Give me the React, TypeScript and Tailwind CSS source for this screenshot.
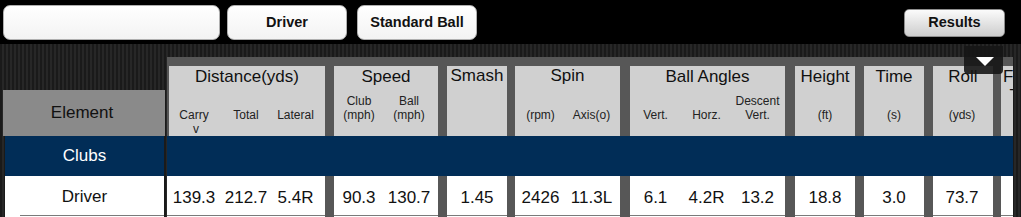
import React from "react";

type Sub = { w: string; lines: string[]; v?: boolean };
type Col = {
  h: string;
  d: string;
  title: string;
  t?: string;
  subs: Sub[];
  vals: string[];
};

const cols: Col[] = [
  {
    h: "w-[156px] ml-[2px]",
    d: "w-[158px] pl-[2px]",
    title: "Distance(yds)",
    subs: [
      { w: "w-[50px]", lines: ["Carry"], v: true },
      { w: "w-[54px]", lines: ["Total"] },
      { w: "w-[45px]", lines: ["Lateral"] },
    ],
    vals: ["139.3", "212.7", "5.4R"],
  },
  {
    h: "w-[104px] ml-[9px]",
    d: "w-[104px] ml-[9px]",
    title: "Speed",
    subs: [
      { w: "w-[50px]", lines: ["Club", "(mph)"] },
      { w: "w-[50px]", lines: ["Ball", "(mph)"] },
    ],
    vals: ["90.3", "130.7"],
  },
  {
    h: "w-[60px] ml-[9px]",
    d: "w-[60px] ml-[9px]",
    title: "Smash",
    t: "pt-0",
    subs: [{ w: "w-[60px]", lines: [""] }],
    vals: ["1.45"],
  },
  {
    h: "w-[105px] ml-[8px]",
    d: "w-[105px] ml-[8px]",
    title: "Spin",
    t: "pt-0",
    subs: [
      { w: "w-[51px]", lines: ["(rpm)"] },
      { w: "w-[51px]", lines: ["Axis(o)"] },
    ],
    vals: ["2426", "11.3L"],
  },
  {
    h: "w-[155px] ml-[10px]",
    d: "w-[155px] ml-[10px]",
    title: "Ball Angles",
    subs: [
      { w: "w-[51px]", lines: ["Vert."] },
      { w: "w-[51px]", lines: ["Horz."] },
      { w: "w-[51px]", lines: ["Descent", "Vert."] },
    ],
    vals: ["6.1", "4.2R", "13.2"],
  },
  {
    h: "w-[60px] ml-[10px]",
    d: "w-[60px] ml-[10px]",
    title: "Height",
    subs: [{ w: "w-[60px]", lines: ["(ft)"] }],
    vals: ["18.8"],
  },
  {
    h: "w-[60px] ml-[9px]",
    d: "w-[60px] ml-[9px]",
    title: "Time",
    subs: [{ w: "w-[60px]", lines: ["(s)"] }],
    vals: ["3.0"],
  },
  {
    h: "w-[60px] ml-[9px]",
    d: "w-[60px] ml-[9px]",
    title: "Roll",
    subs: [{ w: "w-[58px]", lines: ["(yds)"] }],
    vals: ["73.7"],
  },
  {
    h: "w-[64px] ml-[8px]",
    d: "w-[64px] ml-[8px]",
    title: "Face To Target",
    subs: [{ w: "w-[64px]", lines: [""] }],
    vals: [""],
  },
];

export default function App() {
  return (
    <div className="w-[1021px] h-[217px] overflow-hidden bg-black font-['Liberation_Sans',Arial,sans-serif] relative">
      {/* top bar */}
      <div className="h-[44px] flex items-start bg-black">
        <div className="ml-[3px] mt-[5px] w-[217px] h-[35px] rounded-[7px] border border-[#b0b0b0] bg-gradient-to-b from-white to-[#f3f3f3]" />
        <div className="ml-[7px] mt-[5px] w-[120px] h-[35px] rounded-[7px] border border-[#b0b0b0] bg-gradient-to-b from-white to-[#f3f3f3] flex items-center justify-center text-[14.5px] font-bold text-[#111]">
          Driver
        </div>
        <div className="ml-[10px] mt-[5px] w-[120px] h-[35px] rounded-[7px] border border-[#b0b0b0] bg-gradient-to-b from-white to-[#f3f3f3] flex items-center justify-center text-[14.5px] font-bold text-[#111]">
          Standard Ball
        </div>
        <div className="ml-auto mr-[16px] mt-[9px] w-[101px] h-[28px] rounded-[5px] border border-[#8e8e8e] bg-gradient-to-b from-[#fbfbfb] to-[#cdcdcd] flex items-center justify-center text-[14.5px] font-bold text-[#111]">
          Results
        </div>
      </div>

      {/* body */}
      <div className="h-[173px] flex items-start bg-[repeating-linear-gradient(90deg,#1a1a1a_0px,#1a1a1a_2px,#272727_2px,#272727_4px)]">
        {/* left column */}
        <div className="ml-[3px] mt-[46px] w-[162px] flex flex-col">
          <div className="h-[46px] bg-[#8a8a8a] flex items-center justify-center text-[17px] leading-[20px] text-[#111] pr-[4px]">
            Element
          </div>
          <div className="ml-[2px] mr-[1px] h-[40px] bg-[#012d57] flex items-center justify-center text-[17px] leading-[20px] text-white">
            Clubs
          </div>
          <div className="ml-[2px] mr-[1px] h-[39px] bg-white flex items-center justify-center text-[17px] leading-[20px] text-[#111] pt-[2px]">
            Driver
          </div>
          <div className="ml-[2px] mr-[1px] bg-white h-[20px]">
            <div className="ml-[15px] h-px bg-[#7a7a7a]" />
          </div>
        </div>

        {/* right panel */}
        <div className="ml-[2px] mt-[13px] w-[846px] h-[160px] bg-[#575757] overflow-hidden pt-[9px]">
          {/* header cells */}
          <div className="flex h-[70px]">
            {cols.map((c, i) => (
              <div key={i} className={`${c.h} shrink-0 bg-[#d0d0d0] flex flex-col`}>
                <div className={`text-[17px] leading-[19px] text-center text-[#111] ${c.t ?? "pt-[1px]"}`}>
                  {c.title}
                </div>
                <div className="mt-auto mb-[14px] flex items-end">
                  {c.subs.map((s, j) => (
                    <div key={j} className={`${s.w} shrink-0 relative text-center text-[12px] leading-[14px] text-[#222]`}>
                      {s.lines.map((l, k) => (
                        <div key={k} className="h-[14px] whitespace-nowrap">
                          {l}
                        </div>
                      ))}
                      {s.v && (
                        <div className="absolute left-[4px] right-0 top-full text-center">v</div>
                      )}
                    </div>
                  ))}
                </div>
              </div>
            ))}
          </div>

          {/* Clubs bar */}
          <div className="h-[40px] bg-[#012d57]" />

          {/* data row */}
          <div className="flex h-[40px]">
            {cols.map((c, i) => (
              <div key={i} className={`${c.d} shrink-0 bg-white border-b border-[#7a7a7a] flex pt-[12px]`}>
                {c.subs.map((s, j) => (
                  <div key={j} className={`${s.w} shrink-0 text-center text-[17px] leading-[20px] text-[#111]`}>
                    {c.vals[j]}
                  </div>
                ))}
              </div>
            ))}
          </div>
          <div className="flex h-[20px]">
            {cols.map((c, i) => (
              <div key={i} className={`${c.d} shrink-0 bg-white`} />
            ))}
          </div>
        </div>
      </div>

      {/* dropdown toggle overlay */}
      <div className="absolute left-[964px] top-[46px] w-[39px] h-[28px] bg-[#161616]/90 rounded-b-[4px]">
        <svg width="39" height="28" viewBox="0 0 39 28" className="block">
          <polygon points="12,11 30,11 21,20" fill="#ffffff" />
        </svg>
      </div>
    </div>
  );
}
